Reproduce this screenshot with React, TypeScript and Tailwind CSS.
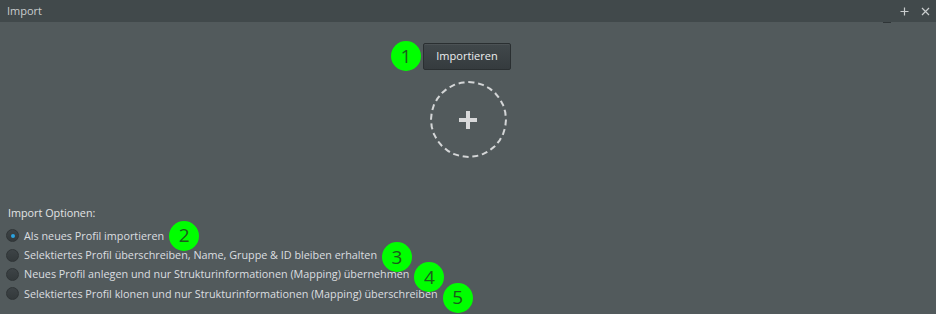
import React from "react";

const font = { fontFamily: '"Open Sans", "Noto Sans", sans-serif' };

function Badge({ n }: { n: number }) {
  return (
    <span className="flex h-[30px] w-[30px] shrink-0 items-center justify-center rounded-full bg-[#00ff00] text-[19px] leading-none text-[#1c5a1c]">
      {n}
    </span>
  );
}

function Radio({ checked }: { checked?: boolean }) {
  return (
    <span className="flex h-[13px] w-[13px] shrink-0 items-center justify-center rounded-full border border-[#2f3436] bg-gradient-to-b from-[#3d4346] to-[#33393b]">
      {checked && <span className="h-[4px] w-[4px] rounded-full bg-[#2ba3e0]" />}
    </span>
  );
}

const options = [
  { text: "Als neues Profil importieren", checked: true, n: 2, dy: "translate-y-[0px]" },
  { text: "Selektiertes Profil überschreiben, Name, Gruppe & ID bleiben erhalten", n: 3, dy: "translate-y-[2px]" },
  { text: "Neues Profil anlegen und nur Strukturinformationen (Mapping) übernehmen", n: 4, dy: "translate-y-[3px]" },
  { text: "Selektiertes Profil klonen und nur Strukturinformationen (Mapping) überschreiben", n: 5, dy: "translate-y-[4px]" },
];

export default function App() {
  return (
    <div className="flex h-[314px] w-[936px] flex-col bg-[#525a5c] text-[10.8px]" style={font}>
      <div className="relative flex h-[22px] shrink-0 items-center justify-between bg-[#41494b] pl-[7px] pr-[6px] text-[#c9cdce]">
        <span className="text-[11px]">Import</span>
        <div className="flex items-center gap-[12px] text-[#c9cdce]">
          <svg width="9" height="9" viewBox="0 0 9 9"><path d="M4.5 0.5v8M0.5 4.5h8" stroke="currentColor" strokeWidth="1.2" /></svg>
          <svg width="9" height="9" viewBox="0 0 9 9"><path d="M1 1l7 7M8 1l-7 7" stroke="currentColor" strokeWidth="1.2" /></svg>
        </div>
        <span className="absolute bottom-[-1px] left-[883px] h-[1px] w-[8px] bg-[#2f3537]" />
      </div>

      <div className="flex flex-col items-center pt-[19px]">
        <div className="flex translate-x-[-17px] items-center gap-[2px]">
          <Badge n={1} />
          <button className="h-[27px] w-[88px] rounded-[2px] border border-[#2a2f31] bg-gradient-to-b from-[#41484b] to-[#353b3e] text-[11px] text-[#eceeef] shadow-[inset_0_1px_0_rgba(255,255,255,0.06)]">
            Importieren
          </button>
        </div>
        <div className="mt-[10px] flex h-[77px] w-[77px] items-center justify-center rounded-full border-2 border-dashed border-[#d4d6d7]">
          <svg width="20" height="20" viewBox="0 0 20 20">
            <path d="M10 1v18M1 10h18" stroke="#d8d9da" strokeWidth="4" />
          </svg>
        </div>
      </div>

      <div className="mt-[47px] flex flex-col pl-[6px] text-[#dcdfe0]">
        <div className="pl-[2px] text-[#e2e4e5]">Import Optionen:</div>
        <div className="mt-[5px] flex flex-col">
          {options.map((o) => (
            <div key={o.n} className="flex h-[19.3px] items-center gap-[5px]">
              <Radio checked={o.checked} />
              <span>{o.text}</span>
              <span className={`-my-[6px] ${o.dy}`}>
                <Badge n={o.n} />
              </span>
            </div>
          ))}
        </div>
      </div>
    </div>
  );
}
